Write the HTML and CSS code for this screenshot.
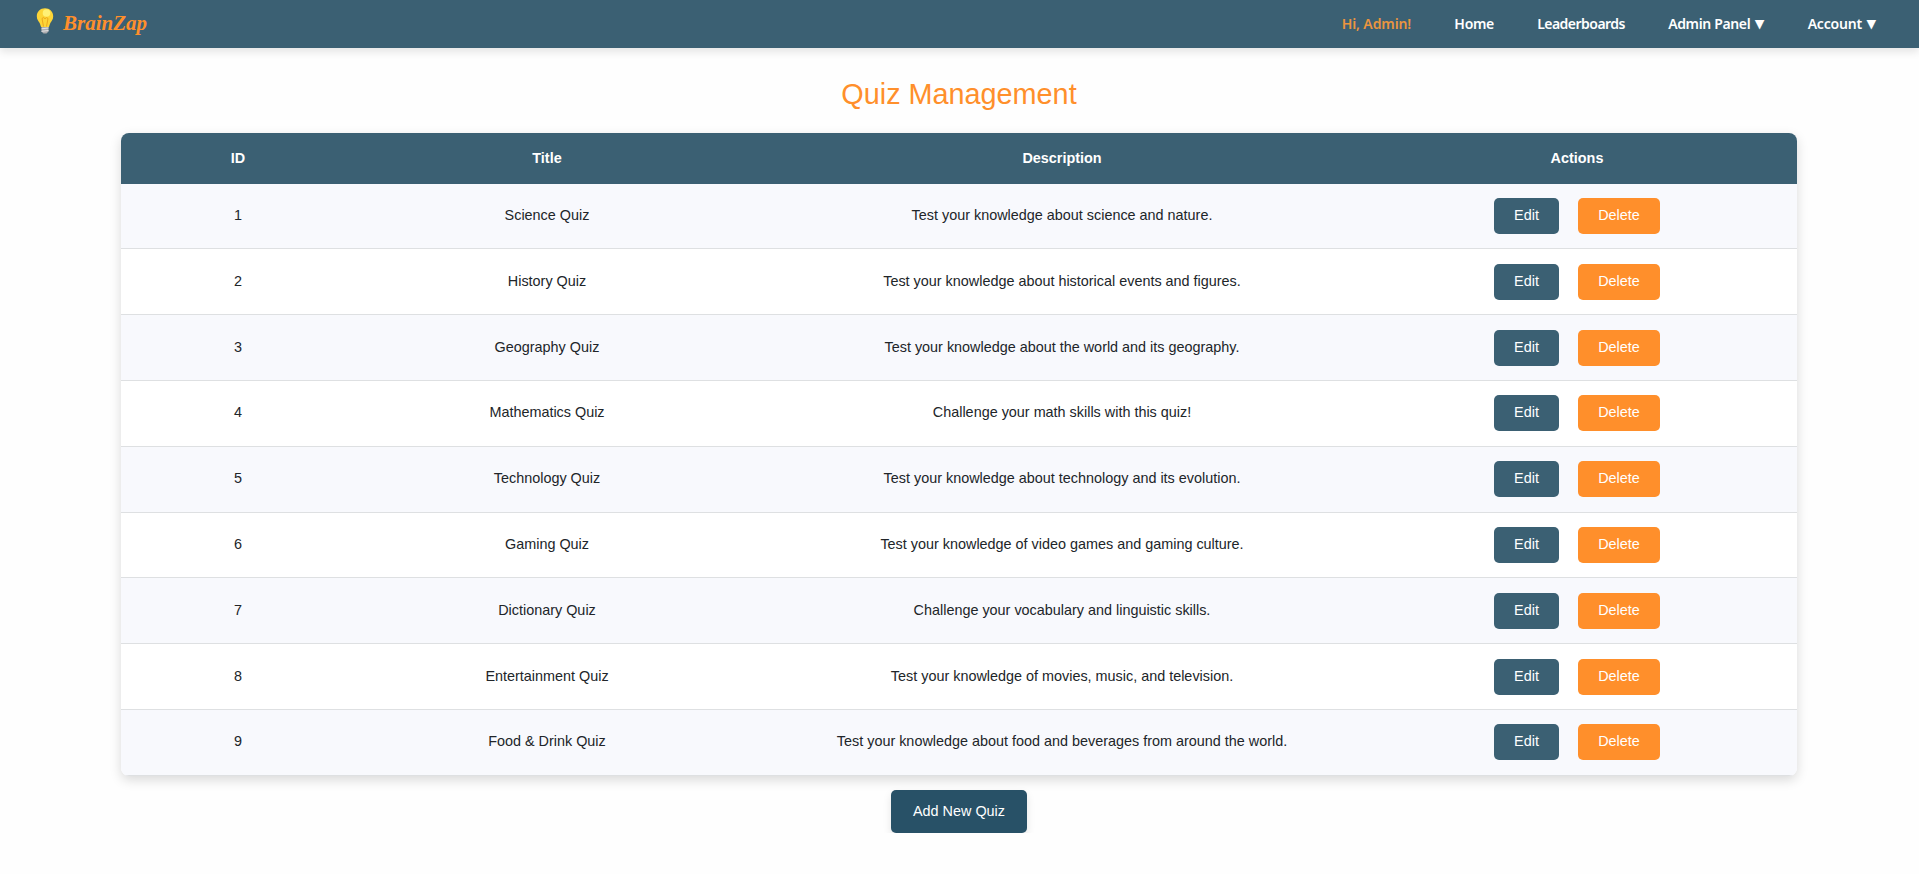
FILE: index.html
```html
<!DOCTYPE html>
<html lang="en">
<head>
<meta charset="utf-8">
<title>Quiz Management</title>
<link rel="stylesheet" href="styles.css">
</head>
<body>
<header class="navbar">
  <a class="brand">
    <svg class="bulb" width="18" height="26" viewBox="0 0 18 26">
      <path d="M9 .3C4.300.3.8 3.700.8 8.200c0 3.200 1.600 4.800 2.700 6.600.9 1.500 1 3.200 1.600 4.200h7.800c.6-1 .7-2.700 1.600-4.200 1.100-1.800 2.700-3.400 2.700-6.600C17.200 3.700 13.700.3 9 .3z" fill="#fdd537"/>
      <path d="M7.500 18.500 6 10.500l1.600-1L9 10.800l1.400-1.300 1.600 1-1.500 8" fill="none" stroke="#eda71d" stroke-width="1"/>
      <circle cx="10.500" cy="5" r="3.800" fill="#fff176"/>
      <path d="M5.500 19h7v4.500l-2 2h-3l-2-2z" fill="#adadb0"/>
      <path d="M5.500 20.800l7-.8M5.500 23.300l7-.8" stroke="#e3e3e5" stroke-width="1"/>
    </svg>
    <span class="brand-name">BrainZap</span>
  </a>
  <nav class="links">
    <span class="link greeting">Hi, Admin!</span>
    <a class="link home">Home</a>
    <a class="link boards">Leaderboards</a>
    <a class="link panel">Admin Panel <span class="caret">▼</span></a>
    <a class="link account">Account <span class="caret">▼</span></a>
  </nav>
</header>
<main class="page">
  <h1 class="title">Quiz Management</h1>
  <table class="quizzes">
    <colgroup><col class="c-id"><col class="c-title"><col class="c-desc"><col class="c-actions"></colgroup>
    <thead><tr><th>ID</th><th>Title</th><th>Description</th><th>Actions</th></tr></thead>
    <tbody>
      <tr><td>1</td><td>Science Quiz</td><td>Test your knowledge about science and nature.</td><td><div class="actions"><a class="btn edit">Edit</a><a class="btn delete">Delete</a></div></td></tr>
      <tr><td>2</td><td>History Quiz</td><td>Test your knowledge about historical events and figures.</td><td><div class="actions"><a class="btn edit">Edit</a><a class="btn delete">Delete</a></div></td></tr>
      <tr><td>3</td><td>Geography Quiz</td><td>Test your knowledge about the world and its geography.</td><td><div class="actions"><a class="btn edit">Edit</a><a class="btn delete">Delete</a></div></td></tr>
      <tr><td>4</td><td>Mathematics Quiz</td><td>Challenge your math skills with this quiz!</td><td><div class="actions"><a class="btn edit">Edit</a><a class="btn delete">Delete</a></div></td></tr>
      <tr><td>5</td><td>Technology Quiz</td><td>Test your knowledge about technology and its evolution.</td><td><div class="actions"><a class="btn edit">Edit</a><a class="btn delete">Delete</a></div></td></tr>
      <tr><td>6</td><td>Gaming Quiz</td><td>Test your knowledge of video games and gaming culture.</td><td><div class="actions"><a class="btn edit">Edit</a><a class="btn delete">Delete</a></div></td></tr>
      <tr><td>7</td><td>Dictionary Quiz</td><td>Challenge your vocabulary and linguistic skills.</td><td><div class="actions"><a class="btn edit">Edit</a><a class="btn delete">Delete</a></div></td></tr>
      <tr><td>8</td><td>Entertainment Quiz</td><td>Test your knowledge of movies, music, and television.</td><td><div class="actions"><a class="btn edit">Edit</a><a class="btn delete">Delete</a></div></td></tr>
      <tr><td>9</td><td>Food &amp; Drink Quiz</td><td>Test your knowledge about food and beverages from around the world.</td><td><div class="actions"><a class="btn edit">Edit</a><a class="btn delete">Delete</a></div></td></tr>
    </tbody>
  </table>
  <a class="add">Add New Quiz</a>
</main>
</body>
</html>
```
FILE: styles.css
```css
* { box-sizing: border-box; }
body {
  margin: 0;
  background: #fefefe;
  color: #212529;
  font: 14.4px/21.6px "Liberation Sans", Arial, sans-serif;
}
.navbar {
  display: flex;
  justify-content: space-between;
  align-items: center;
  height: 48px;
  padding: 0 43px 0 36px;
  background: #3b6073;
  box-shadow: 0 4px 8px rgba(0, 0, 0, .1);
}
.brand { display: flex; align-items: flex-start; gap: 9px; height: 32px; }
.bulb { display: block; }
.brand-name {
  color: #ff8f2b;
  font: italic bold 21px/31px "Liberation Serif", serif;
}
.links { display: flex; gap: 43.200px; margin-top: -1px; }
.link {
  display: flex;
  align-items: center;
  gap: 4.500px;
  color: #fff;
  font: 600 14px/20px "Noto Sans", "Open Sans", sans-serif;
  letter-spacing: -.2px;
  white-space: nowrap;
}
.greeting { color: #ea953f; letter-spacing: -.1px; }
.home { letter-spacing: -.3px; }
.boards { letter-spacing: -.53px; }
.panel { letter-spacing: -.35px; }
.caret { font-family: "DejaVu Sans", sans-serif; font-size: 12.500px; letter-spacing: 0; }
.page { display: flex; flex-direction: column; align-items: center; padding-right: 1px; }
.title {
  margin: 29px 0 20.600px;
  color: #ff8f2b;
  font-size: 28.8px;
  line-height: 35px;
  font-weight: 400;
}
.quizzes {
  width: 1676px;
  table-layout: fixed;
  border-collapse: separate;
  border-spacing: 0;
  border-radius: 8px;
  overflow: hidden;
  text-align: center;
  box-shadow: 0 4px 12px rgba(0, 0, 0, .15);
}
.c-id { width: 234px; }
.c-title { width: 384px; }
.c-desc { width: 646px; }
.c-actions { width: 412px; }
th { height: 51px; padding: 1px 0 0; background: #3b6073; color: #fff; font-weight: 700; }
td { height: 65.800px; padding: 0 0 .200px; border-bottom: 1px solid #dee0e2; background: #fff; }
tr:nth-child(odd) td { background: #f8f9fd; }
th:last-child, td:last-child { padding-right: 28px; }
td:last-child { padding-bottom: 0; }
.actions { display: flex; justify-content: center; gap: 19px; }
.btn { height: 36px; border-radius: 5px; color: #fff; line-height: 35px; }
.edit { width: 65px; background: #3b6073; }
.delete { width: 82px; background: #ff8f2b; }
.add {
  width: 136px;
  height: 43px;
  margin-top: 14.200px;
  border-radius: 5px;
  background: #285167;
  color: #fff;
  line-height: 43px;
  text-align: center;
  box-shadow: 0 4px 8px rgba(0, 0, 0, .1);
}
```
